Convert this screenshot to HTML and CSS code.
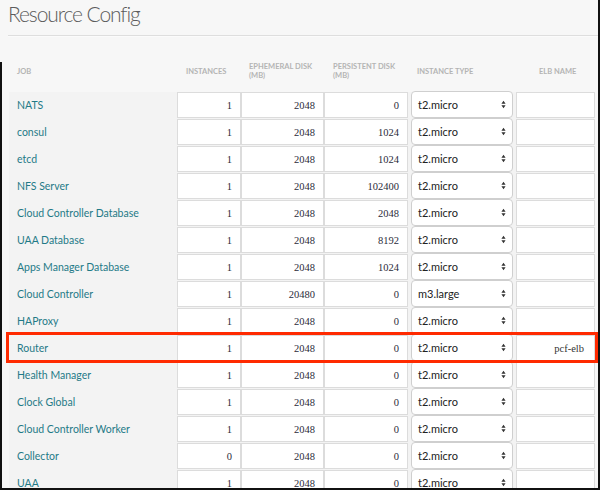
FILE: index.html
```html
<!DOCTYPE html>
<html>
<head>
<meta charset="utf-8">
<link rel="stylesheet" href="styles.css">
</head>
<body>
<div class="page">
  <div class="title-bar"><h1 class="title">Resource Config</h1></div>
  <div class="table">
    <div class="head">
      <div class="hc hc-job">JOB</div>
      <div class="hc hc-inst">INSTANCES</div>
      <div class="hc hc-eph">EPHEMERAL DISK<br>(MB)</div>
      <div class="hc hc-pers">PERSISTENT DISK<br>(MB)</div>
      <div class="hc hc-type">INSTANCE TYPE</div>
      <div class="hc hc-elb">ELB NAME</div>
    </div>
    <div class="rows">
      <div class="row"><div class="job">NATS</div><div class="num">1</div><div class="num">2048</div><div class="num">0</div><div class="sel"><span>t2.micro</span><svg viewBox="0 0 6 10" class="arr"><path d="M3 0.5 L5.5 4 H0.5Z M3 9.5 L5.5 6 H0.5Z"/></svg></div><div class="elb"></div></div>
      <div class="row"><div class="job">consul</div><div class="num">1</div><div class="num">2048</div><div class="num">1024</div><div class="sel"><span>t2.micro</span><svg viewBox="0 0 6 10" class="arr"><path d="M3 0.5 L5.5 4 H0.5Z M3 9.5 L5.5 6 H0.5Z"/></svg></div><div class="elb"></div></div>
      <div class="row"><div class="job">etcd</div><div class="num">1</div><div class="num">2048</div><div class="num">1024</div><div class="sel"><span>t2.micro</span><svg viewBox="0 0 6 10" class="arr"><path d="M3 0.5 L5.5 4 H0.5Z M3 9.5 L5.5 6 H0.5Z"/></svg></div><div class="elb"></div></div>
      <div class="row"><div class="job">NFS Server</div><div class="num">1</div><div class="num">2048</div><div class="num">102400</div><div class="sel"><span>t2.micro</span><svg viewBox="0 0 6 10" class="arr"><path d="M3 0.5 L5.5 4 H0.5Z M3 9.5 L5.5 6 H0.5Z"/></svg></div><div class="elb"></div></div>
      <div class="row"><div class="job">Cloud Controller Database</div><div class="num">1</div><div class="num">2048</div><div class="num">2048</div><div class="sel"><span>t2.micro</span><svg viewBox="0 0 6 10" class="arr"><path d="M3 0.5 L5.5 4 H0.5Z M3 9.5 L5.5 6 H0.5Z"/></svg></div><div class="elb"></div></div>
      <div class="row"><div class="job">UAA Database</div><div class="num">1</div><div class="num">2048</div><div class="num">8192</div><div class="sel"><span>t2.micro</span><svg viewBox="0 0 6 10" class="arr"><path d="M3 0.5 L5.5 4 H0.5Z M3 9.5 L5.5 6 H0.5Z"/></svg></div><div class="elb"></div></div>
      <div class="row"><div class="job">Apps Manager Database</div><div class="num">1</div><div class="num">2048</div><div class="num">1024</div><div class="sel"><span>t2.micro</span><svg viewBox="0 0 6 10" class="arr"><path d="M3 0.5 L5.5 4 H0.5Z M3 9.5 L5.5 6 H0.5Z"/></svg></div><div class="elb"></div></div>
      <div class="row"><div class="job">Cloud Controller</div><div class="num">1</div><div class="num">20480</div><div class="num">0</div><div class="sel"><span>m3.large</span><svg viewBox="0 0 6 10" class="arr"><path d="M3 0.5 L5.5 4 H0.5Z M3 9.5 L5.5 6 H0.5Z"/></svg></div><div class="elb"></div></div>
      <div class="row"><div class="job">HAProxy</div><div class="num">1</div><div class="num">2048</div><div class="num">0</div><div class="sel"><span>t2.micro</span><svg viewBox="0 0 6 10" class="arr"><path d="M3 0.5 L5.5 4 H0.5Z M3 9.5 L5.5 6 H0.5Z"/></svg></div><div class="elb"></div></div>
      <div class="row row-hl"><div class="job">Router</div><div class="num">1</div><div class="num">2048</div><div class="num">0</div><div class="sel"><span>t2.micro</span><svg viewBox="0 0 6 10" class="arr"><path d="M3 0.5 L5.5 4 H0.5Z M3 9.5 L5.5 6 H0.5Z"/></svg></div><div class="elb">pcf-elb</div></div>
      <div class="row"><div class="job">Health Manager</div><div class="num">1</div><div class="num">2048</div><div class="num">0</div><div class="sel"><span>t2.micro</span><svg viewBox="0 0 6 10" class="arr"><path d="M3 0.5 L5.5 4 H0.5Z M3 9.5 L5.5 6 H0.5Z"/></svg></div><div class="elb"></div></div>
      <div class="row"><div class="job">Clock Global</div><div class="num">1</div><div class="num">2048</div><div class="num">0</div><div class="sel"><span>t2.micro</span><svg viewBox="0 0 6 10" class="arr"><path d="M3 0.5 L5.5 4 H0.5Z M3 9.5 L5.5 6 H0.5Z"/></svg></div><div class="elb"></div></div>
      <div class="row"><div class="job">Cloud Controller Worker</div><div class="num">1</div><div class="num">2048</div><div class="num">0</div><div class="sel"><span>t2.micro</span><svg viewBox="0 0 6 10" class="arr"><path d="M3 0.5 L5.5 4 H0.5Z M3 9.5 L5.5 6 H0.5Z"/></svg></div><div class="elb"></div></div>
      <div class="row"><div class="job">Collector</div><div class="num">0</div><div class="num">2048</div><div class="num">0</div><div class="sel"><span>t2.micro</span><svg viewBox="0 0 6 10" class="arr"><path d="M3 0.5 L5.5 4 H0.5Z M3 9.5 L5.5 6 H0.5Z"/></svg></div><div class="elb"></div></div>
      <div class="row"><div class="job">UAA</div><div class="num">1</div><div class="num">2048</div><div class="num">0</div><div class="sel"><span>t2.micro</span><svg viewBox="0 0 6 10" class="arr"><path d="M3 0.5 L5.5 4 H0.5Z M3 9.5 L5.5 6 H0.5Z"/></svg></div><div class="elb"></div></div>
    </div>
  </div>
</div>
</body>
</html>
```
FILE: styles.css
```css
html, body {
  margin: 0;
  padding: 0;
  width: 600px;
  height: 490px;
  overflow: hidden;
  background: #f7f7f7;
}
.page {
  box-sizing: border-box;
  width: 600px;
  height: 490px;
  overflow: hidden;
  border-right: 2px solid #111;
  border-bottom: 2px solid #111;
  font-family: Lato, "Open Sans", sans-serif;
}
.title-bar {
  margin-left: 8px;
  height: 35px;
  border-bottom: 1px solid #dedede;
  box-shadow: 0 1px 0 #fbfbfb;
}
.title {
  margin: 0;
  padding-top: 2px;
  font-size: 21px;
  line-height: 24px;
  font-weight: 300;
  color: #5c5c5c;
  letter-spacing: -1.1px;
}
.table {
  margin-top: 26px;
  border-left: 2px solid #111;
  padding-left: 7px;
  padding-right: 3px;
  height: 500px;
}
.head {
  display: grid;
  grid-template-columns: 168px 64px 83px 84px 108px 1fr;
  height: 18px;
  align-items: center;
  margin-bottom: 12px;
}
.hc {
  font-size: 7.5px;
  line-height: 9px;
  font-weight: 700;
  color: #b4b4b4;
  white-space: nowrap;
  overflow: hidden;
}
.hc-job { padding-left: 8px; }
.hc-inst { padding-left: 9px; width: 42px; }
.hc-eph { padding-left: 8px; }
.hc-pers { padding-left: 9px; }
.hc-type { padding-left: 9px; }
.hc-elb { padding-left: 23px; }
.rows {
  display: flex;
  flex-direction: column;
  gap: 2px;
  background: #f3f3f3;
}
.row {
  display: grid;
  grid-template-columns: 168px 64px 83px 84px 108px 1fr;
  height: 25px;
}
.row-hl {
  outline: 3px solid #ff2a00;
  position: relative;
  z-index: 1;
}
.job {
  padding-left: 8px;
  display: flex;
  align-items: center;
  font-size: 10.5px;
  color: #1f7a87;
}
.num {
  box-sizing: border-box;
  background: #fff;
  border: 1px solid #dcdcdc;
  display: flex;
  align-items: center;
  justify-content: flex-end;
  padding-right: 8px;
  font-family: "Liberation Serif", serif;
  font-size: 10.5px;
  color: #2b2b3a;
}
.sel {
  box-sizing: border-box;
  margin: -1px 3px 0 3px;
  height: 27px;
  background: #fff;
  border: 1px solid #cfcfcf;
  border-radius: 4px;
  display: flex;
  align-items: center;
  justify-content: space-between;
  padding: 0 6px 0 6px;
  font-size: 11px;
  color: #222;
}
.arr {
  width: 5px;
  height: 9px;
  fill: #333;
}
.elb {
  box-sizing: border-box;
  background: #fff;
  border: 1px solid #dcdcdc;
  display: flex;
  align-items: center;
  justify-content: flex-end;
  padding-right: 10px;
  font-family: "Liberation Serif", serif;
  font-size: 10.5px;
  color: #333;
}
```
